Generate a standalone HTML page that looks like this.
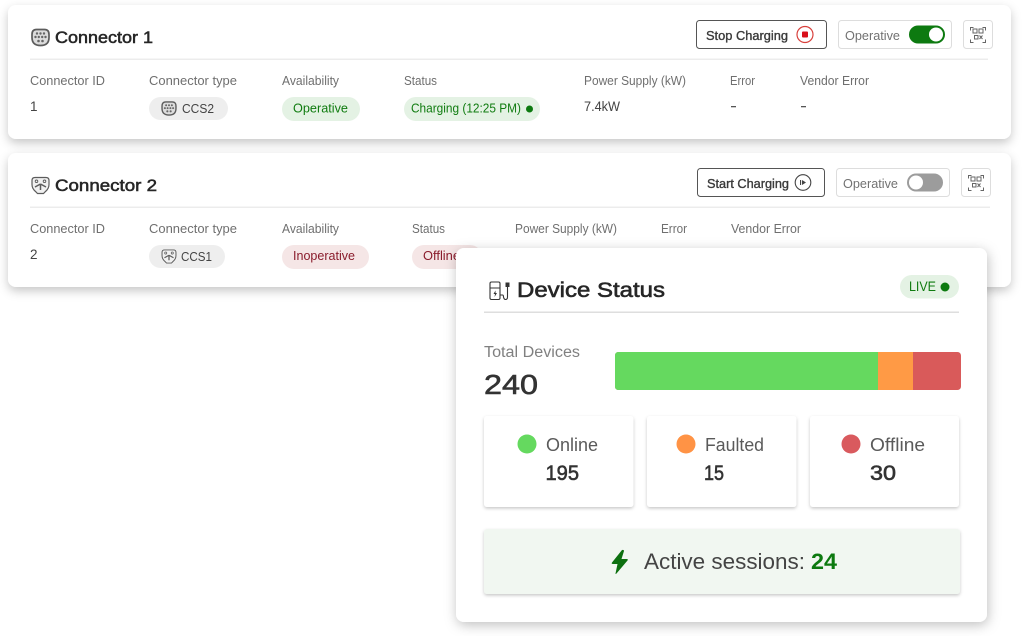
<!DOCTYPE html>
<html>
<head>
<meta charset="utf-8">
<style>
html,body{margin:0;padding:0;background:#fff;width:1024px;height:636px;overflow:hidden}
svg{display:block;filter:blur(.3px)}
text{font-family:"Liberation Sans",sans-serif}
.l{font-size:13px;fill:#6f6f6f}
.v{font-size:13.5px;fill:#444}
.t{font-size:17px;fill:#262626;stroke:#262626;stroke-width:.55px}
.b{font-size:12.5px;fill:#3a3a3a;stroke:#3a3a3a;stroke-width:.35px}
.o{font-size:13px;fill:#727272}
.g{font-size:13px;fill:#107c10}
.r{font-size:13px;fill:#8a1c2c}
.h{fill:#333;stroke:#333;stroke-width:.6px}
</style>
</head>
<body>
<svg width="1024" height="636" viewBox="0 0 1024 636" xmlns="http://www.w3.org/2000/svg">
<defs>
<filter id="s1" x="-5%" y="-20%" width="110%" height="145%"><feDropShadow dx="0" dy="4" stdDeviation="5" flood-color="#000" flood-opacity=".22"/></filter>
<filter id="s2" x="-10%" y="-10%" width="120%" height="120%"><feDropShadow dx="1" dy="3" stdDeviation="6" flood-color="#000" flood-opacity=".25"/></filter>
<filter id="s3" x="-10%" y="-10%" width="120%" height="125%"><feDropShadow dx="0" dy="1.5" stdDeviation="1.5" flood-color="#000" flood-opacity=".22"/></filter>
<g id="ccs2">
<path d="M-4-8H4Q8.500-8 8.500-3V0Q8.500 8 0 8Q-8.500 8-8.500 0V-3Q-8.500-8-4-8Z" fill="#dcdcdc" stroke="#5c5c5c" stroke-width="1.700"/>
<g fill="#666"><circle cx="-3.500" cy="-4" r="1.200"/><circle cx="0" cy="-4" r="1.200"/><circle cx="3.500" cy="-4" r="1.200"/><circle cx="-5" cy="-0.500" r="1.200"/><circle cx="-1.700" cy="-0.500" r="1.200"/><circle cx="1.700" cy="-0.500" r="1.200"/><circle cx="5" cy="-0.500" r="1.200"/><circle cx="-2" cy="3.500" r="1.300"/><circle cx="2" cy="3.500" r="1.300"/></g>
</g>
<g id="ccs1">
<path d="M-5.500-8H5.500Q8.500-8 8.500-5V-1Q8.500 3 5 6L3 8H-3L-5 6Q-8.500 3-8.500-1V-5Q-8.500-8-5.500-8Z" fill="#f0f0f0" stroke="#5c5c5c" stroke-width="1.200"/>
<path d="M0-1.500V4.500M0-1.500L-5.500 1.500M0-1.500L5.500 1.500" stroke="#5c5c5c" stroke-width="1.500" fill="none"/>
<circle cx="-4" cy="-4.200" r="1.300" fill="none" stroke="#5c5c5c" stroke-width=".9"/><circle cx="4" cy="-4.200" r="1.300" fill="none" stroke="#5c5c5c" stroke-width=".9"/>
</g>
<g id="qr">
<rect x="0" y="0" width="29" height="28" rx="3" fill="#fff" stroke="#ddd"/>
<g fill="none" stroke="#666" stroke-width="1">
<path d="M7 10V7H10M19 7H22V10M7 19V22H10M22 19V22H19"/>
<rect x="9.500" y="8.500" width="4" height="4"/><rect x="15.500" y="8.500" width="4" height="4"/><rect x="11" y="15" width="3.500" height="3.500"/>
<path d="M16 15L19 18.500M19 15L16 18.500"/>
</g>
</g>
</defs>

<!-- Card 1 -->
<rect x="8" y="5" width="1003" height="134" rx="8" fill="#fff" filter="url(#s1)"/>
<use href="#ccs2" x="40.500" y="37.500"/>
<text class="t" x="55" y="43" textLength="98" lengthAdjust="spacingAndGlyphs">Connector 1</text>
<rect x="30" y="58.500" width="958" height="1.500" fill="#ececec"/>

<rect x="696.500" y="20.500" width="130" height="28" rx="3" fill="#fff" stroke="#555"/>
<text class="b" x="706" y="40" textLength="82" lengthAdjust="spacingAndGlyphs">Stop Charging</text>
<circle cx="805" cy="34.500" r="8" fill="none" stroke="#d8403c" stroke-width="1.200"/>
<rect x="802" y="31.500" width="6" height="6" rx="1" fill="#d9101c"/>

<rect x="838.500" y="20.500" width="113" height="28" rx="3" fill="#fff" stroke="#ddd"/>
<text class="o" x="845" y="40" textLength="55" lengthAdjust="spacingAndGlyphs">Operative</text>
<rect x="909" y="25.500" width="36" height="18" rx="9" fill="#0d7a10"/>
<circle cx="936" cy="34.500" r="7" fill="#fff"/>
<use href="#qr" x="963.500" y="20.500"/>

<text class="l" x="30" y="85" textLength="75" lengthAdjust="spacingAndGlyphs">Connector ID</text>
<text class="l" x="149" y="85" textLength="88" lengthAdjust="spacingAndGlyphs">Connector type</text>
<text class="l" x="282" y="85" textLength="57" lengthAdjust="spacingAndGlyphs">Availability</text>
<text class="l" x="404" y="85" textLength="33" lengthAdjust="spacingAndGlyphs">Status</text>
<text class="l" x="584" y="85" textLength="102" lengthAdjust="spacingAndGlyphs">Power Supply (kW)</text>
<text class="l" x="730" y="85" textLength="25" lengthAdjust="spacingAndGlyphs">Error</text>
<text class="l" x="800" y="85" textLength="69" lengthAdjust="spacingAndGlyphs">Vendor Error</text>

<text class="v" x="30" y="111">1</text>
<rect x="149" y="97" width="79" height="23" rx="11.500" fill="#eee"/>
<use href="#ccs2" transform="translate(169 108.500) scale(.82)"/>
<text class="v" x="182" y="113" textLength="32" lengthAdjust="spacingAndGlyphs" style="font-size:13px">CCS2</text>
<rect x="282" y="97" width="78" height="24" rx="12" fill="#e4f2e4"/>
<text class="g" x="293" y="112.500" textLength="55" lengthAdjust="spacingAndGlyphs">Operative</text>
<rect x="404" y="97" width="136" height="24" rx="12" fill="#e4f2e4"/>
<text class="g" x="411" y="112.500" textLength="110" lengthAdjust="spacingAndGlyphs">Charging (12:25 PM)</text>
<circle cx="529.500" cy="109" r="3.500" fill="#0d7a10"/>
<text class="v" x="584" y="111" textLength="36" lengthAdjust="spacingAndGlyphs">7.4kW</text>
<rect x="731" y="106" width="5" height="1.300" fill="#555"/>
<rect x="801" y="106" width="5" height="1.300" fill="#555"/>

<!-- Card 2 -->
<rect x="8" y="153" width="1003" height="134" rx="8" fill="#fff" filter="url(#s1)"/>
<use href="#ccs1" x="40.500" y="185.500"/>
<text class="t" x="55" y="191" textLength="102" lengthAdjust="spacingAndGlyphs">Connector 2</text>
<rect x="30" y="206.500" width="960" height="1.500" fill="#ececec"/>

<rect x="697.500" y="168.500" width="127" height="28" rx="3" fill="#fff" stroke="#555"/>
<text class="b" x="707" y="188" textLength="82" lengthAdjust="spacingAndGlyphs">Start Charging</text>
<circle cx="803" cy="182.500" r="7.800" fill="none" stroke="#444" stroke-width="1.100"/>
<rect x="800" y="180" width="1.100" height="5" fill="#444"/>
<path d="M802 180L806 182.500L802 185Z" fill="#444"/>

<rect x="836.500" y="168.500" width="113" height="28" rx="3" fill="#fff" stroke="#ddd"/>
<text class="o" x="843" y="188" textLength="55" lengthAdjust="spacingAndGlyphs">Operative</text>
<rect x="907" y="173.500" width="36" height="18" rx="9" fill="#9c9c9c"/>
<circle cx="916" cy="182.500" r="7" fill="#fff"/>
<use href="#qr" x="961.500" y="168.500"/>

<text class="l" x="30" y="233" textLength="75" lengthAdjust="spacingAndGlyphs">Connector ID</text>
<text class="l" x="149" y="233" textLength="88" lengthAdjust="spacingAndGlyphs">Connector type</text>
<text class="l" x="282" y="233" textLength="57" lengthAdjust="spacingAndGlyphs">Availability</text>
<text class="l" x="412" y="233" textLength="33" lengthAdjust="spacingAndGlyphs">Status</text>
<text class="l" x="515" y="233" textLength="102" lengthAdjust="spacingAndGlyphs">Power Supply (kW)</text>
<text class="l" x="661" y="233" textLength="26" lengthAdjust="spacingAndGlyphs">Error</text>
<text class="l" x="731" y="233" textLength="70" lengthAdjust="spacingAndGlyphs">Vendor Error</text>

<text class="v" x="30" y="259">2</text>
<rect x="149" y="245" width="76" height="23" rx="11.500" fill="#eee"/>
<use href="#ccs1" transform="translate(169 256.500) scale(.82)"/>
<text class="v" x="181" y="261" textLength="31" lengthAdjust="spacingAndGlyphs" style="font-size:13px">CCS1</text>
<rect x="282" y="245" width="87" height="24" rx="12" fill="#f5e6e6"/>
<text class="r" x="293" y="260" textLength="62" lengthAdjust="spacingAndGlyphs">Inoperative</text>
<rect x="412" y="245" width="70" height="24" rx="12" fill="#f5e6e6"/>
<text class="r" x="423" y="260" textLength="37" lengthAdjust="spacingAndGlyphs">Offline</text>

<!-- Device Status -->
<rect x="456" y="248" width="531" height="374" rx="8" fill="#fff" filter="url(#s2)"/>
<g fill="none" stroke="#333" stroke-width="1.100">
<rect x="490" y="282" width="10" height="17.500" rx="1.500"/>
<path d="M490 288H500M500 295H502.500Q503.500 295 503.500 297Q504 299.500 505.500 299.500Q507.500 299.500 507.500 297V287"/>
</g>
<rect x="505.500" y="282.500" width="4" height="4.500" fill="#333"/>
<path d="M495.500 290.500L493.500 294H495L494.500 297L497 293H495.500Z" fill="#333"/>
<text class="h" x="517" y="297" textLength="148" lengthAdjust="spacingAndGlyphs" style="font-size:21px;fill:#262626;stroke:#262626">Device Status</text>
<rect x="900" y="275" width="59" height="23.500" rx="11.750" fill="#e4f2e4"/>
<text x="909" y="291" textLength="27" lengthAdjust="spacingAndGlyphs" style="font-size:13.500px;fill:#107c10">LIVE</text>
<circle cx="945" cy="287" r="4.500" fill="#0d7a10"/>
<rect x="484" y="311.500" width="475" height="1.500" fill="#dedede"/>

<text x="484" y="357" textLength="96" lengthAdjust="spacingAndGlyphs" style="font-size:15.500px;fill:#808080">Total Devices</text>
<text class="h" x="484" y="394" textLength="54" lengthAdjust="spacingAndGlyphs" style="font-size:28px">240</text>

<rect x="615" y="352" width="346" height="38" rx="3.500" fill="#d95a5a"/>
<path d="M618.500 352H878V390H618.500Q615 390 615 386.500V355.500Q615 352 618.500 352Z" fill="#65d95f"/>
<rect x="878" y="352" width="35" height="38" fill="#ff9a45"/>

<rect x="484" y="416" width="149.500" height="91" rx="3" fill="#fff" filter="url(#s3)"/>
<rect x="647" y="416" width="149.500" height="91" rx="3" fill="#fff" filter="url(#s3)"/>
<rect x="810" y="416" width="149" height="91" rx="3" fill="#fff" filter="url(#s3)"/>

<circle cx="527" cy="444" r="9.500" fill="#65d95f"/>
<text x="546" y="451" textLength="52" lengthAdjust="spacingAndGlyphs" style="font-size:18px;fill:#5a5a5a">Online</text>
<text class="h" x="545.500" y="480" textLength="33.500" lengthAdjust="spacingAndGlyphs" style="font-size:21px">195</text>

<circle cx="686" cy="444" r="9.500" fill="#ff9345"/>
<text x="705" y="451" textLength="59" lengthAdjust="spacingAndGlyphs" style="font-size:18px;fill:#5a5a5a">Faulted</text>
<text class="h" x="704" y="480" textLength="20" lengthAdjust="spacingAndGlyphs" style="font-size:21px">15</text>

<circle cx="851" cy="444" r="9.500" fill="#d95a5e"/>
<text x="870" y="451" textLength="55" lengthAdjust="spacingAndGlyphs" style="font-size:18px;fill:#5a5a5a">Offline</text>
<text class="h" x="870" y="480" textLength="26" lengthAdjust="spacingAndGlyphs" style="font-size:21px">30</text>

<rect x="484" y="529" width="476" height="65" rx="3" fill="#f1f7f1" filter="url(#s3)"/>
<path d="M622 550L612 562.500Q611 564 613 564H617.500L615.500 573.500Q615.500 574.500 616.500 573.500L627.500 560.500Q628.500 559 626.500 559H621.500L624 551Q624 549.500 622 550Z" fill="#0d7010"/>
<text x="644" y="569" textLength="161" lengthAdjust="spacingAndGlyphs" style="font-size:22px;fill:#444">Active sessions:</text>
<text x="811" y="569" textLength="26" lengthAdjust="spacingAndGlyphs" style="font-size:22px;font-weight:bold;fill:#0d7a10">24</text>
</svg>
</body>
</html>
